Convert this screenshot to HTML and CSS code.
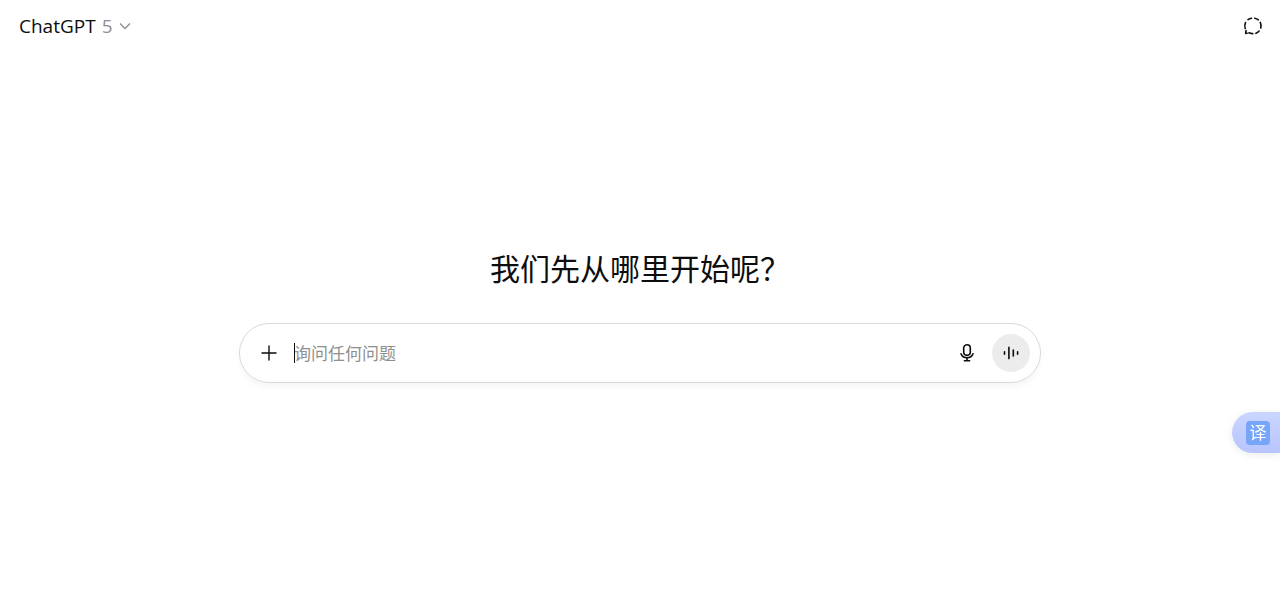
FILE: index.html
```html
<!DOCTYPE html>
<html lang="zh-CN">
<head>
<meta charset="utf-8">
<meta name="viewport" content="width=device-width, initial-scale=1">
<title>ChatGPT</title>
<link rel="stylesheet" href="styles.css">
</head>
<body>
<header class="topbar">
  <button class="model" type="button">
    <span>ChatGPT</span>
    <span class="model-version">5</span>
    <svg class="chevron" width="12" height="8" viewBox="0 0 12 8" aria-hidden="true"><path d="M1 1.5 6 6.5 11 1.5"/></svg>
  </button>
  <button class="temporary" type="button" aria-label="临时聊天">
    <svg class="line" width="20" height="20" viewBox="0 0 20 20" aria-hidden="true">
      <path d="M8.5 2.2Q6.6 2.5 5 3.6M11.8 2.2Q13.8 2.6 15.3 3.8M17.3 6.4Q18.5 9.2 17.8 12M16.1 15Q14.7 16.6 12.9 17.3M9.8 17.6Q8.2 17.5 6.9 16.9L5.8 17M2.2 12.4Q1.2 9.4 2.5 6.6M3 14.6 2.7 17.4 4.2 17.2"/>
    </svg>
  </button>
</header>
<main class="start">
  <h1 class="greeting">我们先从哪里开始呢？</h1>
  <form class="composer">
    <button class="tool" type="button" aria-label="添加">
      <svg class="line thin" width="20" height="20" viewBox="0 0 20 20" aria-hidden="true"><path d="M10 3V17M3 10H17"/></svg>
    </button>
    <div class="field">
      <input class="prompt" type="text" placeholder="询问任何问题" aria-label="询问任何问题">
      <span class="caret"></span>
    </div>
    <button class="tool" type="button" aria-label="听写">
      <svg class="line" width="20" height="20" viewBox="0 0 20 20" aria-hidden="true"><rect x="6.7" y="1.8" width="6.6" height="10.6" rx="3.3"/><path d="M4 10.8C5 13.6 7.2 14.8 10 14.8S15 13.6 16 10.8M10 14.8V17.8M7.4 17.8H12.6"/></svg>
    </button>
    <button class="voice" type="button" aria-label="语音模式">
      <svg class="line" width="20" height="20" viewBox="0 0 20 20" aria-hidden="true"><path d="M3.5 8.8V11.2M7.9 4.4V15.6M12.3 7V13M16.6 8.8V11.2"/></svg>
    </button>
  </form>
</main>
<button class="translate" type="button" aria-label="翻译"><span class="translate-icon">译</span></button>
</body>
</html>
```
FILE: styles.css
```css
* {
  box-sizing: border-box;
}

body {
  margin: 0;
  min-height: 100vh;
  display: flex;
  flex-direction: column;
  background: #fff;
  color: #0d0d0d;
  font-family: "Noto Sans", "Noto Sans CJK SC", sans-serif;
}

button {
  display: flex;
  align-items: center;
  justify-content: center;
  padding: 0;
  border: 0;
  background: none;
  color: inherit;
  font: inherit;
  cursor: pointer;
}

.topbar {
  display: flex;
  align-items: center;
  justify-content: space-between;
  height: 51px;
  padding: 0 17px 0 19px;
}

.model {
  gap: 6px;
  font-family: "Open Sans", sans-serif;
  font-size: 19px;
  line-height: 28px;
}

.model-version {
  color: #8f8f8f;
}

.chevron {
  fill: none;
  stroke: #8f8f8f;
  stroke-width: 1.4;
}

.line {
  fill: none;
  stroke: currentColor;
  stroke-width: 1.6;
  stroke-linecap: round;
  stroke-linejoin: round;
}

.thin {
  stroke-width: 1.4;
}

.start {
  display: flex;
  flex: 1;
  flex-direction: column;
  align-items: center;
  justify-content: center;
  gap: 36px;
  padding: 0 16px 11px;
}

.greeting {
  margin: 0;
  font-family: "Noto Sans CJK SC", sans-serif;
  font-size: 30px;
  font-weight: 400;
  line-height: 40px;
}

.composer {
  display: flex;
  align-items: center;
  width: 100%;
  max-width: 802px;
  padding: 10px;
  border: 1px solid #d9d9d9;
  border-radius: 30px;
  box-shadow: 0 4px 6px rgba(0, 0, 0, 0.04);
}

.tool,
.voice {
  flex: none;
  width: 38px;
  height: 38px;
  border-radius: 50%;
}

.voice {
  margin-left: 6px;
  background: #ececec;
}

.field {
  position: relative;
  flex: 1;
  margin-left: 6px;
}

.prompt {
  display: block;
  width: 100%;
  height: 28px;
  padding: 0;
  border: 0;
  outline: 0;
  background: none;
  color: inherit;
  font-family: "Noto Sans CJK SC", sans-serif;
  font-size: 17px;
}

.prompt::placeholder {
  color: #8f8f8f;
  opacity: 1;
}

.caret {
  position: absolute;
  top: 4px;
  left: 0;
  width: 1px;
  height: 20px;
  background: #0d0d0d;
}

.translate {
  position: fixed;
  top: 412px;
  right: 0;
  width: 48px;
  height: 41px;
  padding-left: 4px;
  border-radius: 21px 0 0 21px;
  background: linear-gradient(#cbd6ff, #b7c4ff);
  box-shadow: 0 2px 8px rgba(0, 0, 0, 0.08);
}

.translate-icon {
  width: 24px;
  height: 24px;
  border-radius: 4px;
  background: #77a6f8;
  color: #fff;
  font-family: "Noto Sans CJK SC", sans-serif;
  font-size: 17px;
  line-height: 22px;
}
```
